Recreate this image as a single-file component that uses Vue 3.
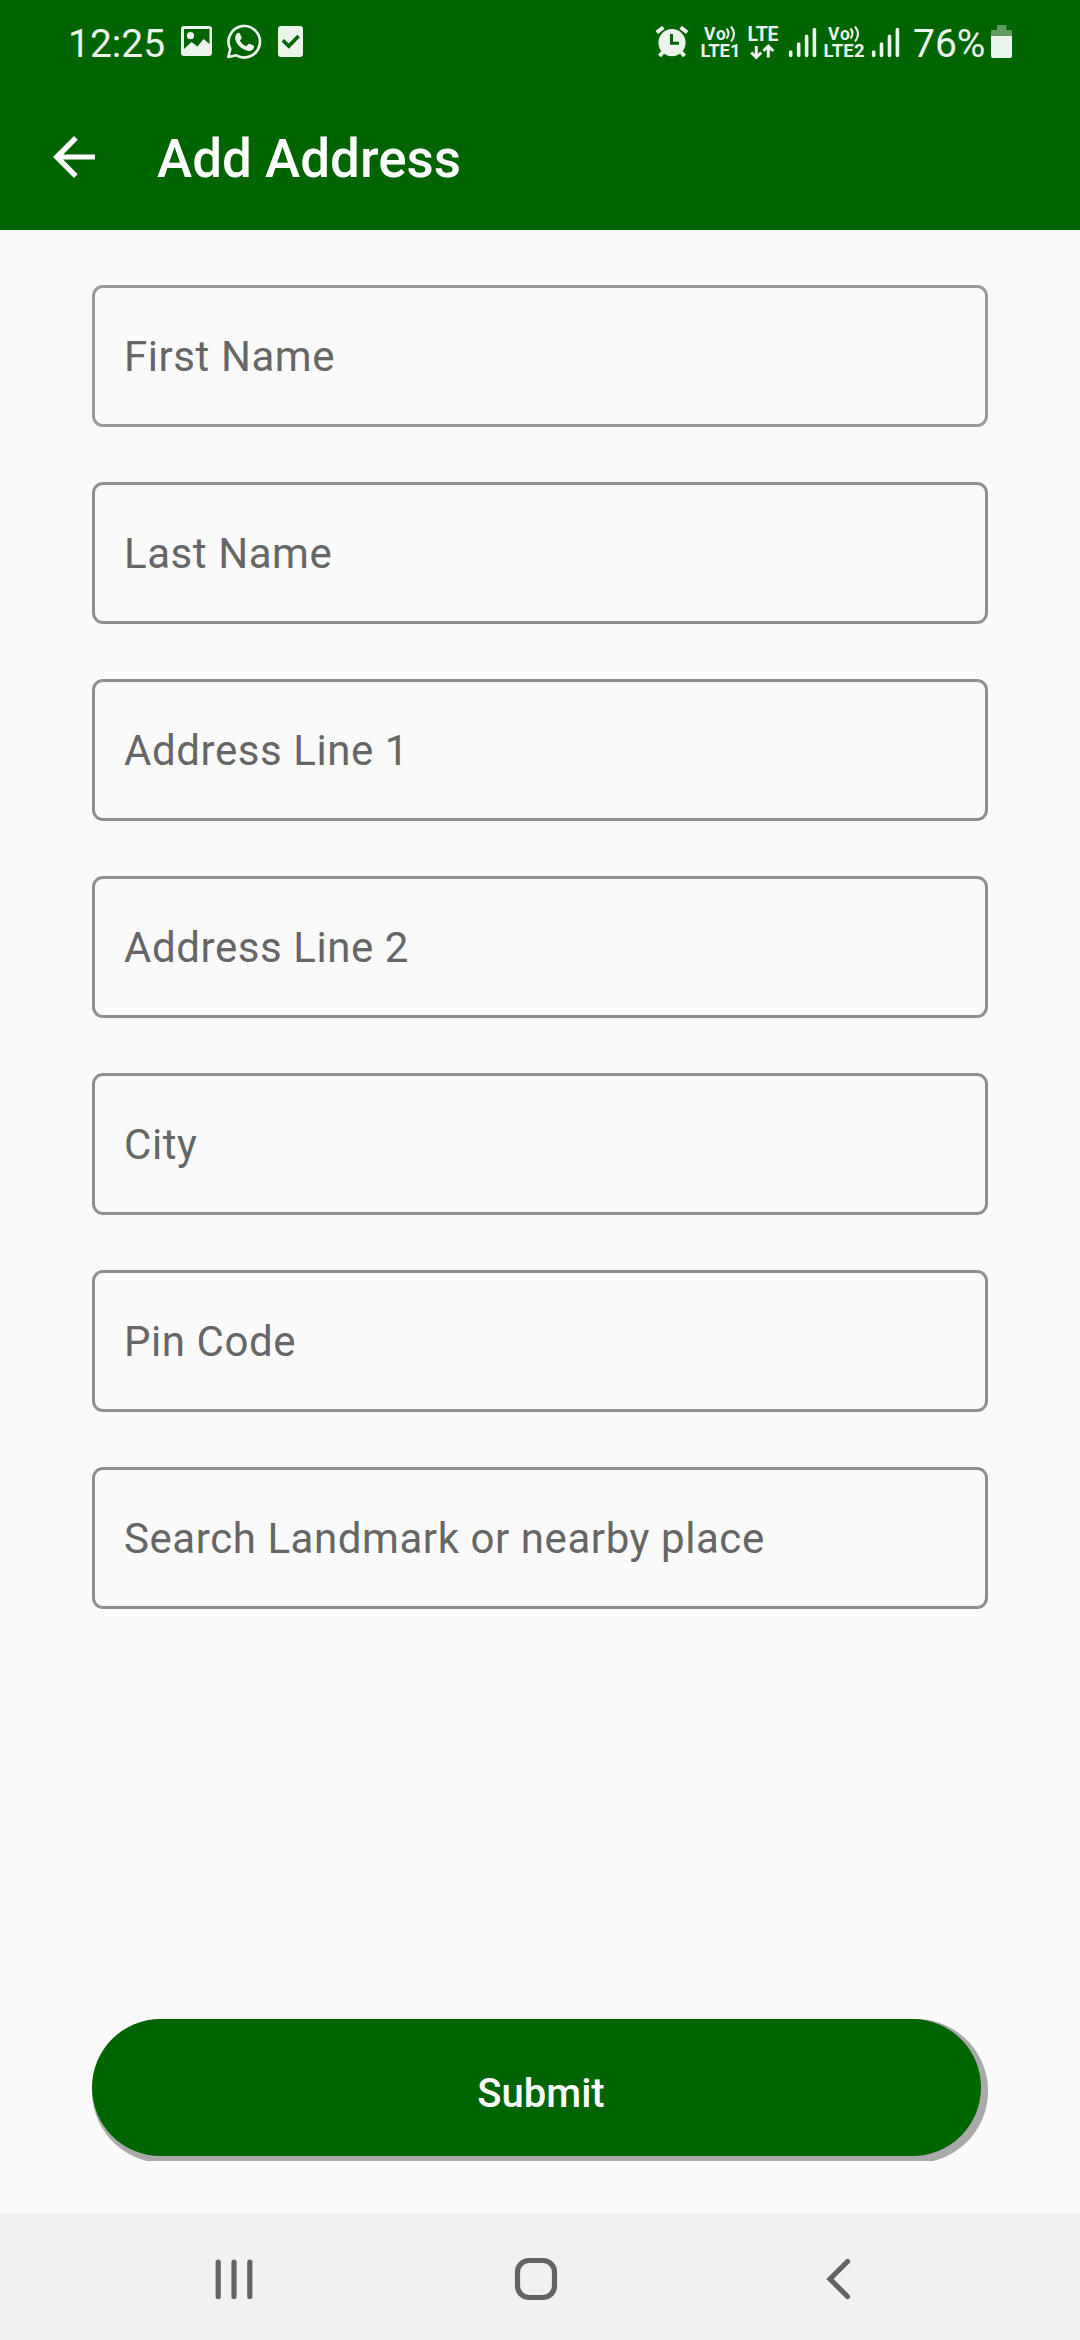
<script setup>
const fields = [
  'First Name',
  'Last Name',
  'Address Line 1',
  'Address Line 2',
  'City',
  'Pin Code',
  'Search Landmark or nearby place',
]
</script>

<template>
  <div class="screen">
    <header class="top">
      <div class="status">
        <span class="clock">12:25</span>
        <svg class="notifications" width="130" height="84" viewBox="178 0 130 84">
          <path fill-rule="evenodd" d="M184 26h25a3 3 0 0 1 3 3v24a3 3 0 0 1-3 3h-25a3 3 0 0 1-3-3V29a3 3 0 0 1 3-3zM184 29v20l7.500-7 6 4.500 6-7.500 6 5V29z" />
          <circle cx="190.500" cy="35.700" r="3.600" />
          <path fill="none" stroke="#ebf4eb" stroke-width="2.700" stroke-linejoin="round" d="M228.300 57l2-8a15.700 15.700 0 1 1 6 6.300z" />
          <path d="M237.200 33.300c.9-.8 2.200-.7 2.700.3l1.600 3.700c.3.700 0 1.300-.5 1.900l-1.200 1.400c1.500 2.700 3.700 4.500 6.600 5.700l1.700-2.100c.5-.6 1-.7 1.700-.4l3.500 1.700c.8.400.9 1 .7 1.900-.7 2.800-3.700 4-6.400 3.300-6.300-1.600-10.600-5.600-12.300-11.200-.6-2.500.3-4.700 1.900-6.200z" />
          <rect x="278" y="26" width="25" height="31" rx="3" />
          <path fill="none" stroke="#006400" stroke-width="3.600" d="M282.800 40.300l6 5.800 9.800-10" />
        </svg>
        <svg class="connectivity" width="254" height="84" viewBox="652 0 254 84">
          <circle cx="672" cy="42.700" r="13.600" />
          <path class="line" stroke-width="4" d="M656.800 32.500l6.500-5.300M687.200 32.500l-6.500-5.300M663 52l-3.500 4M681 52l3.500 4" />
          <path fill="none" stroke="#006400" stroke-width="3" d="M671.500 34v9.300h7.500" />

          <text x="704" y="39.500" font-size="17.500" textLength="22">Vo</text>
          <path class="line" stroke-width="2.100" d="M726.500 28.500q4 5 0 10M731 26.500q6 7.500 0 15" />
          <text x="700.500" y="57" font-size="18.500" textLength="40">LTE1</text>

          <text x="747.500" y="41" font-size="19.500" textLength="31">LTE</text>
          <path class="line" stroke-width="3" d="M756.300 46v11M751.300 52.500l5 5 5-5M768.300 57.500v-11M763.300 51l5-5 5 5" />

          <path class="line bar" d="M790.700 52v3.500M798.700 44v11.500M806.600 36.300v19.200M814.400 29.500v26" />

          <text x="828" y="39.500" font-size="17.500" textLength="22">Vo</text>
          <path class="line" stroke-width="2.100" d="M850.500 28.500q4 5 0 10M855 26.500q6 7.500 0 15" />
          <text x="823.500" y="57" font-size="18.500" textLength="41">LTE2</text>

          <path class="line bar" d="M873.700 52v3.500M881.500 44v11.500M889.500 36.300v19.200M897.400 29.500v26" />
        </svg>
        <span class="percent">76%</span>
        <svg class="battery" width="21" height="84" viewBox="991 0 21 84">
          <path fill="#5e9c5e" d="M997 25h9.500v5h4.500a1 1 0 0 1 1 1v5h-21v-5a1 1 0 0 1 1-1h5z" />
          <path d="M991 36h21v20a2 2 0 0 1-2 2h-17a2 2 0 0 1-2-2z" />
        </svg>
      </div>
      <div class="toolbar">
        <svg class="back" width="42" height="42" viewBox="0 0 42 42">
          <path d="M42 18.400H10.200l14.600-14.600L21 0 0 21l21 21 3.700-3.700L10.200 23.600H42z" />
        </svg>
        <h1>Add Address</h1>
      </div>
    </header>

    <main>
      <div v-for="label in fields" :key="label" class="field">
        <span>{{ label }}</span>
      </div>
      <div class="submit-wrap">
        <button class="submit" type="button">Submit</button>
      </div>
    </main>

    <nav>
      <svg width="1080" height="126" viewBox="0 0 1080 126">
        <path d="M218.200 48v34.400M234 48v34.400M249.800 48v34.400" />
        <rect x="517.500" y="46.500" width="37" height="37" rx="11.500" />
        <path d="M847.500 47.500L830 65l17.500 17.500" />
      </svg>
    </nav>
  </div>
</template>

<style>
body {
  background: #fafafa;
}
</style>

<style scoped>
.screen {
  width: 1080px;
  height: 2340px;
  display: flex;
  flex-direction: column;
  background: #fafafa;
  font-family: Roboto, sans-serif;
  overflow: hidden;
}
.top {
  height: 230px;
  background: #006400;
}
.status {
  height: 84px;
  display: flex;
  align-items: center;
  color: #ebf4eb;
  fill: #ebf4eb;
  font-size: 39px;
  line-height: 84px;
  white-space: nowrap;
}
.status svg {
  flex: none;
}
.status text {
  font-weight: 700;
}
.clock,
.percent {
  padding-top: 3px;
}
.clock {
  width: 110px;
  margin-left: 68px;
}
.connectivity {
  margin-left: 344px;
}
.percent {
  width: 78px;
  margin-left: 7px;
}
.line {
  fill: none;
  stroke: #ebf4eb;
}
.bar {
  stroke-width: 3.6;
  stroke-linecap: round;
}
.toolbar {
  height: 146px;
  display: flex;
  align-items: center;
}
.back {
  margin: 0 62px 0 53px;
  fill: #fff;
}
h1 {
  margin: 3px 0 0;
  color: #fff;
  font-size: 53px;
  font-weight: 500;
  line-height: 62px;
}
main {
  flex: 1;
  display: flex;
  flex-direction: column;
  gap: 55px;
  padding: 55px 92px 53px;
}
.field {
  box-sizing: border-box;
  height: 142px;
  display: flex;
  align-items: center;
  padding: 2px 0 0 29px;
  border: 3px solid #8f8f8f;
  border-radius: 11px;
  color: #666;
  font-size: 42px;
  line-height: 50px;
  letter-spacing: 0.57px;
}
.field:first-child {
  border-color: #9b9b9b;
}
/* The hard grey shadow runs past the box and is cut off at its lower edge. */
.submit-wrap {
  height: 142px;
  margin-top: auto;
  background: radial-gradient(circle at 72px 72px, #a9a9a9 71.5px, transparent 72.5px) 0 0 / 72px 144px no-repeat,
    radial-gradient(circle at 0 72px, #a9a9a9 71.5px, transparent 72.5px) 100% 0 / 72px 144px no-repeat,
    linear-gradient(#a9a9a9, #a9a9a9) 72px 0 / 752px 100% no-repeat;
}
.submit {
  display: block;
  width: 889px;
  height: 137px;
  padding: 12px 0 0 9px;
  border: 0;
  border-radius: 69px;
  background: #006400;
  color: #fff;
  font: 500 40px/48px Roboto, sans-serif;
}
nav {
  height: 126px;
  background: #f1f1f1;
}
nav svg {
  display: block;
  fill: none;
  stroke: #636363;
  stroke-width: 5.2;
  stroke-linecap: round;
}
</style>
